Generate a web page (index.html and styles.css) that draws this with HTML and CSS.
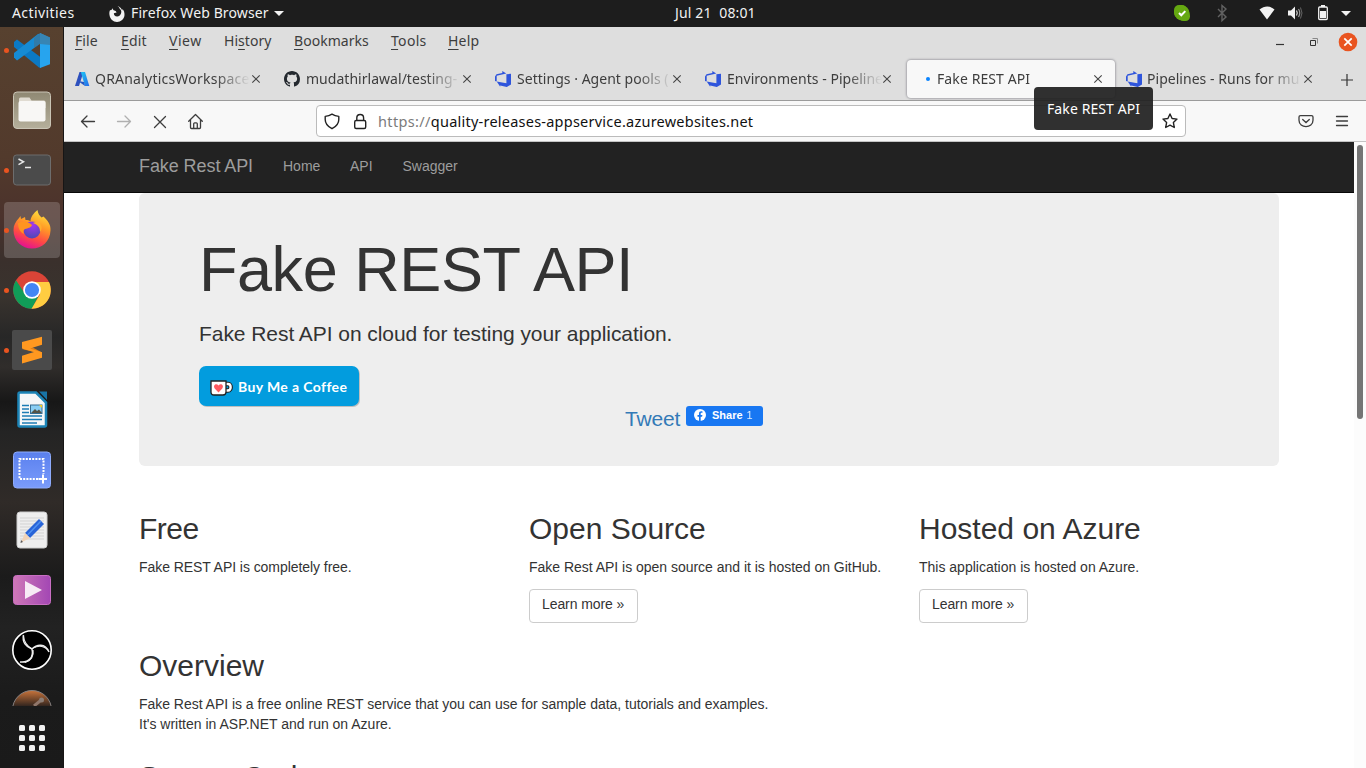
FILE: index.html
```html
<!DOCTYPE html>
<html lang="en">
<head>
<meta charset="utf-8">
<title>Fake REST API</title>
<link rel="stylesheet" href="styles.css">
</head>
<body>
<svg width="0" height="0" class="defs">
  <defs>
    <linearGradient id="ff" x1="0.8" y1="0" x2="0.4" y2="1"><stop offset="0" stop-color="#ffe940"/><stop offset=".4" stop-color="#ff9a26"/><stop offset=".72" stop-color="#ff4a44"/><stop offset="1" stop-color="#e4128f"/></linearGradient>
    <radialGradient id="globe" cx=".55" cy=".2" r=".8"><stop offset="0" stop-color="#a436ee"/><stop offset="1" stop-color="#4c49b5"/></radialGradient>
    <linearGradient id="files" x1="0" y1="0" x2="0" y2="1"><stop offset="0" stop-color="#8f8873"/><stop offset="1" stop-color="#b5af9b"/></linearGradient>
    <linearGradient id="shot" x1="0" y1="0" x2="0" y2="1"><stop offset="0" stop-color="#5a80ee"/><stop offset="1" stop-color="#7b9cfb"/></linearGradient>
    <linearGradient id="vid" x1="0" y1="0" x2="1" y2="0"><stop offset="0" stop-color="#cf78b8"/><stop offset="1" stop-color="#a347b4"/></linearGradient>
    <linearGradient id="post" x1="0" y1="0" x2="0" y2=".42"><stop offset="0" stop-color="#c9743b"/><stop offset="1" stop-color="#2b211d"/></linearGradient>
    <linearGradient id="az" x1="0" y1="0" x2="1" y2="1"><stop offset="0" stop-color="#1fc7f5"/><stop offset="1" stop-color="#2668e8"/></linearGradient>
    <symbol id="x" viewBox="0 0 10 10"><path d="M1.300 1.300l7.400 7.400M8.700 1.300l-7.400 7.400" stroke="#444" stroke-width="1.100" fill="none"/></symbol>
    <symbol id="devops" viewBox="0 0 16 16"><path d="M0 5.400 1.500 3.300 7.300 2V0l4 2.600-9.600 2.200v5.700L0 10z" fill="#2f55dc"/><path d="M16 2.800v10.600L11.800 16l-6.600-1.500v1.300L1.700 10.500l9.700 1.700V3.200z" fill="#2f55dc"/></symbol>
  </defs>
</svg>

<header class="topbar">
  <span class="activities">Activities</span>
  <svg class="ffmono" width="16" height="16" viewBox="0 0 16 16"><path d="M8.500 0c1.300.8 2 1.800 2.200 2.800 1.700 1.200 2 3 1.200 4.900-.7 1.700-2.100 2.800-3.800 2.700C6 10.300 4.700 9 4.900 7.200L7.600 6.500 6.700 4.900 4.600 4.300 3.200 2.200 2.600 4 1 4.200C.3 5.600.2 7.300.5 9c.5 4 3.700 7 7.500 7s7.300-3 7.500-7c.1-2.600-.6-4.400-2-6l-.3 1.500C12.500 2.500 10.900.8 8.500 0z" fill="#f2f2f2"/></svg>
  <span class="appname">Firefox Web Browser</span>
  <svg class="caret" width="10" height="5" viewBox="0 0 10 5"><path d="M0 0h10L5 5z" fill="#f2f2f2"/></svg>
  <span class="clock">Jul 21&nbsp; 08:01</span>
  <svg class="tray" width="200" height="27" viewBox="1166 0 200 27">
    <rect x="1174" y="5" width="13" height="13" rx="5" fill="#65a811"/><circle cx="1182" cy="13" r="7.500" fill="#65a811"/><rect x="1179" y="11" width="11" height="10" rx="4.500" fill="#65a811"/>
    <path d="m1179 13 2.300 2.300 4-4.200" stroke="#fff" stroke-width="2" fill="none"/>
    <path d="m1218 9 8 8-4 3.600V5.500l4 3.500-8 8" stroke="#626262" stroke-width="1.400" fill="none"/>
    <path d="M1259.500 9.600c5-4 10.500-4 15 0L1267 19.500z" fill="#f2f2f2"/>
    <path d="M1288 10.500h3l4-4v13l-4-4h-3z" fill="#f2f2f2"/><path d="M1296.500 10.500q1.500 2.500 0 5" stroke="#ddd" stroke-width="1.200" fill="none"/><path d="M1298.500 9q2.500 4 0 8" stroke="#999" stroke-width="1.200" fill="none"/><path d="M1300.500 7.500q3 5.500 0 11" stroke="#666" stroke-width="1" fill="none"/>
    <rect x="1318.700" y="7" width="8.600" height="12.500" rx="1" stroke="#f2f2f2" stroke-width="1.300" fill="none"/><path d="M1321 5h4v2h-4zM1320 11h6v7h-6z" fill="#f2f2f2"/>
    <path d="M1341 11h10l-5 5z" fill="#f2f2f2"/>
  </svg>
</header>

<div class="desktop">
<aside class="dock">
  <div class="app first run"><svg width="64" height="53" viewBox="0 7 64 53"><path d="m14 22 3-2.500L41 37.500V48l-2-.5L14 27z" fill="#0b79c4"/><path d="m14 37.500 3 3L41 23v-9.500L38 14 14 33z" fill="#168bd4"/><path d="M40 13l10 4.500v26.800L40 48z" fill="#27a4ee"/><path d="M40 13l10 4.500V25l-10-1-6 4v-10z" fill="#42728e" opacity=".6"/></svg></div>
  <div class="app"><svg width="64" height="60"><rect x="13.500" y="12" width="37" height="36.500" rx="3.500" fill="url(#files)" stroke="#c9c4b5"/><path d="M19 19q0-1.500 1.500-1.500h9l2 3H44q1.500 0 1.500 1.500v6H19z" fill="#e0dbd1"/><rect x="18.500" y="21" width="27" height="20.500" rx="2" fill="#f8f7f5"/></svg></div>
  <div class="app run"><svg width="64" height="60"><rect x="13.500" y="15" width="37" height="30" rx="3" fill="#4b4b4b" stroke="#6d6d6d"/><path d="m18.500 19 5 2.800-5 2.800M25 27.500h6" stroke="#e8e8e8" stroke-width="1.500" fill="none"/></svg></div>
  <div class="app run active"><svg width="64" height="60"><path d="M13.500 30c0-5 2-8 5.500-12l1.500-2 .5 3 4-2 .5 3c2 0 4 .5 5 1.200 0-4 3-8 7-11.200.5 4 2 5.500 4 7.500l2-1c4 4 7.500 8 7 14C50 41.500 42 48.500 32 48.500S13.500 41 13.500 30z" fill="url(#ff)"/><circle cx="32" cy="30" r="8.500" fill="url(#globe)"/><path d="M18 23c5-2 10-1.500 14 2-1 3-4 3-7 4-2 1-2 3-1 5-4-2-6-6-6-11z" fill="#ff9420"/><path d="M33 23c3-2 7-1 8 2 1.500 3 0 6-1 7 0-5-2-7-7-9z" fill="#ffad2d"/></svg></div>
  <div class="app run"><svg width="64" height="60"><circle cx="32" cy="30" r="18.700" fill="#da4437"/><path d="M16 20.300A18.700 18.700 0 0 0 32 48.700l6-12-13-3z" fill="#109d58"/><path d="M49 22H32l8 12.500-8.500 14.200A18.700 18.700 0 0 0 49 22z" fill="#ffcd41"/><circle cx="32" cy="30" r="8.800" fill="#fff"/><circle cx="32" cy="30" r="7.100" fill="#4285f4"/></svg></div>
  <div class="app run"><svg width="64" height="60"><rect x="12" y="10" width="40" height="40" rx="2" fill="#4a4a4a"/><path d="m22 29 20 5v-1.500L30 26z" fill="#df7d12"/><path d="m22 22 20-5.300v8L30 28.500l12 3.800v5.500l-20 5.700v-7.800L34 32l-12-3.500z" fill="#ff9820"/></svg></div>
  <div class="app"><svg width="64" height="60"><path d="M18.500 14q0-1.500 1.500-1.500h16l10 10V45q0 1.500-1.500 1.500H20q-1.500 0-1.500-1.500z" fill="#f5f7f8" stroke="#1c84b6" stroke-width="2.500"/><path d="M39 11.500h8V20z" fill="#1874a6"/><path d="M22 25.500h7M22 29h7M22 32.500h7M22 36h20M22 39.500h20M22 43h15" stroke="#1c7cb4" stroke-width="1.500"/><rect x="30.500" y="25" width="11.500" height="8.500" fill="#88cef4" stroke="#376d91"/><path d="m31 33 4-4 2 2 2-1.500 3 3.500z" fill="#535347"/><path d="M39 25h3v3z" fill="#f8cc17"/></svg></div>
  <div class="app"><svg width="64" height="60"><rect x="13.500" y="12" width="37" height="36" rx="3.500" fill="url(#shot)" stroke="#8eabfb"/><path d="M38 39H19.500V19h24v15" fill="none" stroke="#fff" stroke-width="2" stroke-dasharray="2 1.200"/><path d="M38.500 39h8.500M43 34.500v9" stroke="#fff" stroke-width="2"/></svg></div>
  <div class="app"><svg width="64" height="60"><rect x="17" y="12" width="30" height="36" rx="3" fill="#eee" stroke="#ccc"/><path d="M20 18h24M20 21h24M20 24h24M20 27h24M20 30h24M20 33h24M20 36h24M20 39h24" stroke="#d3d3d3"/><path d="m39 19 5 5-14 14-5-5z" fill="#2864d8"/><path d="m41 21-13.500 14" stroke="#4f91f1" stroke-width="1.500"/><path d="m25 33 5 5-9 4.500z" fill="#f1d4b8"/><path d="m21 40 2 2-2.500 1z" fill="#555"/></svg></div>
  <div class="app"><svg width="64" height="60"><rect x="13.500" y="15.500" width="37" height="29" rx="3" fill="url(#vid)" stroke="#c96fc3"/><path d="M25 21v18l17-9z" fill="#f7eaf5"/></svg></div>
  <div class="app"><svg width="64" height="60"><circle cx="32" cy="30" r="19.200" fill="#000" stroke="#fff" stroke-width="1.600"/><path d="M32 29c-6-2-10-7-8.500-14M32 29c5-5 13-6 17 3M32 29c2 8-3 14-12 13" fill="none" stroke="#eee" stroke-width="1.500"/><path d="M32 29c-5-3-8-7-8.500-13M33 28c6-3 11-2 15 2M33 30c1 6-2 11-8 12.500" fill="none" stroke="#eee" stroke-width="1.200"/></svg></div>
  <div class="app cut"><svg width="64" height="26"><circle cx="32" cy="30" r="19.500" fill="url(#post)" stroke="#858080"/><path d="m34 26 6-5" stroke="#90776b" stroke-width="3"/><circle cx="41.500" cy="20" r="2.500" fill="#8b7d75"/></svg></div>
  <div class="grid"><i></i><i></i><i></i><i></i><i></i><i></i><i></i><i></i><i></i></div>
</aside>

<main class="browser">
  <div class="menubar">
    <nav class="menus"><span class="m1"><u>F</u>ile</span><span class="m2"><u>E</u>dit</span><span class="m3"><u>V</u>iew</span><span class="m4">Hi<u>s</u>tory</span><span class="m5"><u>B</u>ookmarks</span><span class="m6"><u>T</u>ools</span><span class="m7"><u>H</u>elp</span></nav>
    <svg width="90" height="30" viewBox="1270 27 90 30"><path d="M1276 44.500h8" stroke="#333" stroke-width="1.200"/><path d="M1310.500 40.500h5v5h-5z" fill="none" stroke="#333"/><path d="M1312.500 38.500h5v5" fill="none" stroke="#888"/><circle cx="1348" cy="42" r="9.300" fill="#e95420"/><path d="m1344.300 38.300 7.400 7.400m0-7.400-7.400 7.400" stroke="#fff" stroke-width="1.700"/></svg>
  </div>
  <div class="tabs">
    <div class="tab first-tab"><svg class="fav" width="16" height="16"><path d="M5.500 1h4L5 15H1z" fill="#2d50bd"/><path d="M7 1h4l4.300 14H11L8 5z" fill="url(#az)"/><path d="m4 10 6 1 1 4z" fill="#2456c5"/></svg><span class="t">QRAnalyticsWorkspace</span><svg class="close" width="10" height="10"><use href="#x"/></svg></div>
    <div class="tab"><svg class="fav" width="16" height="16" viewBox="0 0 16 16"><path d="M8 0C3.580 0 0 3.580 0 8c0 3.540 2.290 6.530 5.470 7.590.4.070.55-.17.55-.38 0-.19-.01-.82-.01-1.490-2.010.37-2.530-.49-2.690-.94-.09-.23-.48-.94-.82-1.130-.28-.15-.68-.52-.01-.53.630-.01 1.080.58 1.230.82.720 1.210 1.870.87 2.330.66.070-.52.280-.87.510-1.070-1.780-.2-3.640-.89-3.640-3.950 0-.87.310-1.590.82-2.150-.08-.2-.36-1.020.08-2.120 0 0 .67-.21 2.200.82.640-.18 1.320-.27 2-.27s1.360.09 2 .27c1.530-1.040 2.200-.82 2.200-.82.440 1.100.16 1.920.08 2.120.510.56.820 1.270.82 2.150 0 3.070-1.870 3.750-3.650 3.950.290.25.540.73.540 1.480 0 1.070-.01 1.930-.01 2.200 0 .21.150.46.550.38A8 8 0 0 0 16 8c0-4.420-3.580-8-8-8z" fill="#24292f"/></svg><span class="t">mudathirlawal/testing-</span><svg class="close" width="10" height="10"><use href="#x"/></svg></div>
    <div class="tab third"><svg class="fav" width="16" height="16"><use href="#devops"/></svg><span class="t">Settings · Agent pools (</span><svg class="close" width="10" height="10"><use href="#x"/></svg></div>
    <div class="tab third"><svg class="fav" width="16" height="16"><use href="#devops"/></svg><span class="t">Environments - Pipeline</span><svg class="close" width="10" height="10"><use href="#x"/></svg></div>
    <div class="tab current"><i class="loading"></i><span class="t">Fake REST API</span><svg class="close" width="10" height="10"><use href="#x"/></svg></div>
    <div class="tab last"><svg class="fav" width="16" height="16"><use href="#devops"/></svg><span class="t">Pipelines - Runs for mu</span><svg class="close" width="10" height="10"><use href="#x"/></svg></div>
    <svg class="plus" width="12" height="12"><path d="M6 0v12M0 6h12" stroke="#333" stroke-width="1.200"/></svg>
  </div>
  <div class="toolbar">
    <svg width="252" height="40" viewBox="64 101 252 40" fill="none" stroke="#3d3d3d" stroke-width="1.300" stroke-linejoin="round" stroke-linecap="round"><path d="M81.500 121.500h13M87 116l-5.500 5.500L87 127"/><path d="M117.500 121.500h13M125 116l5.500 5.500-5.500 5.500" stroke="#b0b0b0"/><path d="m154.500 116.500 11 11m0-11-11 11"/><path d="m188.700 121.300 6.800-6.800 6.800 6.800M190.500 120v7.500q0 1 1 1h8q1 0 1-1V120M193.700 128.500v-4.700q0-1 1-1h1.600q1 0 1 1v4.700"/></svg>
    <div class="urlbar">
      <svg width="54" height="30" viewBox="317 106 54 30" fill="none" stroke="#222" stroke-width="1.400" stroke-linejoin="round"><path d="M332 114.200c2 1.300 4.300 2 6.800 2.200v3c0 4-2.500 7-6.800 9.300-4.300-2.300-6.800-5.300-6.800-9.300v-3c2.500-.2 4.800-.9 6.800-2.200z"/><rect x="354.700" y="120.500" width="11" height="8" rx="1.500"/><path d="M356.800 120.500V118c0-4.600 6.800-4.600 6.800 0v2.500"/></svg>
      <span class="url"><span class="scheme">https://</span>quality-releases-appservice.azurewebsites.net</span>
      <svg class="star" width="16" height="16" viewBox="0 0 16 16"><path d="m8 1 2.100 4.500 4.900.6-3.600 3.500.9 4.900L8 12.200l-4.300 2.300.9-4.900L1 6.100l4.900-.6z" fill="none" stroke="#222" stroke-width="1.400" stroke-linejoin="round"/></svg>
    </div>
    <svg class="right" width="60" height="40" viewBox="1296 101 60 40" fill="none" stroke="#3d3d3d" stroke-width="1.300" stroke-linecap="round"><path d="M1300.500 115.600h11q1.500 0 1.500 1.500v3.200c0 8.500-14 8.500-14 0v-3.200q0-1.500 1.500-1.500z"/><path d="m1302.700 119.500 3.300 3 3.300-3"/><path d="M1336.500 116.500h11M1336.500 121h11M1336.500 125.500h11"/></svg>
  </div>
  <div class="tooltip">Fake REST API</div>

  <div class="viewport">
    <div class="page">
      <nav class="navbar"><a class="brand">Fake Rest API</a><a class="n1">Home</a><a class="n2">API</a><a class="n3">Swagger</a></nav>
      <div class="container">
        <section class="jumbo">
          <h1>Fake REST API</h1>
          <p class="lead">Fake Rest API on cloud for testing your application.</p>
          <a class="coffee"><svg width="23" height="17" viewBox="0 0 23 17"><path d="M16 4h2c3.500 0 3.500 6.500 0 6.500h-2" fill="none" stroke="#222" stroke-width="4.600"/><path d="M16 4h2c3.500 0 3.500 6.500 0 6.500h-2" fill="none" stroke="#fff" stroke-width="2.400"/><path d="M1 1h15v11q0 3-3 3H4q-3 0-3-3z" fill="#fff" stroke="#222" stroke-width="1.300"/><path d="M8.500 12.500 4.700 8.500C2.500 5 6.500 2.800 8.500 5.500c2-2.700 6-.5 3.800 3z" fill="#ff5a60"/></svg><span>Buy Me a Coffee</span></a>
          <div class="social"><a class="tweet">Tweet</a><a class="share"><svg width="12" height="12" viewBox="0 0 12 12"><circle cx="6" cy="6" r="6" fill="#fff"/><path d="M5 12V7.700H3.500V6H5V4.700c0-1.600.9-2.400 2.300-2.400.5 0 .9 0 1.200.1v1.400h-.8c-.7 0-1 .4-1 1V6h1.700l-.3 1.700H6.700V12z" fill="#1877f2"/></svg><b>Share</b><span>1</span></a></div>
        </section>
        <div class="cols">
          <section><h2 class="free">Free</h2><p class="c1">Fake REST API is completely free.</p></section>
          <section><h2>Open Source</h2><p class="c2">Fake Rest API is open source and it is hosted on GitHub.</p><a class="btn">Learn more »</a></section>
          <section><h2>Hosted on Azure</h2><p class="c3">This application is hosted on Azure.</p><a class="btn">Learn more »</a></section>
        </div>
        <section class="overview"><h2>Overview</h2><p><span class="o1">Fake Rest API is a free online REST service that you can use for sample data, tutorials and examples.</span><br>It's written in ASP.NET and run on Azure.</p></section>
        <section class="source"><h2>Source Code</h2></section>
      </div>
    </div>
    <div class="scroll"><i></i></div>
  </div>
</main>
</div>
</body>
</html>
```
FILE: styles.css
```css
* { box-sizing: border-box; }
body { margin: 0; width: 1366px; height: 768px; overflow: hidden; background: #fff; font-family: "Noto Sans", "Open Sans", sans-serif; }
svg { display: block; flex: none; }
.defs { position: absolute; }
span, a { white-space: nowrap; }

.topbar { position: relative; height: 27px; background: #1d1d1d; color: #f2f2f2; font-size: 14px; line-height: 26px; display: flex; align-items: center; padding-left: 12px; }
.activities { width: 97px; letter-spacing: .42px; padding-bottom: 1px; }
.appname { margin-left: 6px; width: 138px; letter-spacing: .12px; padding-bottom: 1px; }
.caret { margin-left: 5px; }
.clock { position: absolute; left: 675px; top: 0; letter-spacing: .15px; }
.tray { margin-left: auto; }

.desktop { display: flex; height: 741px; }
.dock { width: 64px; flex: none; display: flex; flex-direction: column; box-shadow: inset -1px 0 0 #171515; background: linear-gradient(#57412f 0, #523a2c 130px, #4b322c 190px, #3a302c 235px, #39332e 270px, #272727 310px, #302d2b 340px, #171717 375px, #242424 405px, #302b28 475px, #1b1b1b 550px, #222 600px, #1b1b1b 670px, #1a1a1a); }
.app { height: 60px; flex: none; position: relative; }
.first { height: 53px; }
.cut { height: 26px; overflow: hidden; }
.app svg { position: relative; }
.run::before { content: ""; position: absolute; left: 4px; bottom: 27px; width: 5px; height: 5px; border-radius: 50%; background: #e95420; z-index: 1; }
.active::after { content: ""; position: absolute; inset: 2px 4px; border-radius: 4px; background: rgba(255,255,255,.18); }
.active svg { z-index: 1; }
.grid { display: grid; grid-template-columns: repeat(3, 6px); grid-auto-rows: 6px; gap: 4px; margin: 19px 0 0 19px; }
.grid i { background: #f2f2f2; border-radius: 1.5px; }

.browser { flex: 1; min-width: 0; position: relative; display: flex; flex-direction: column; }
.menubar { height: 30px; background: #dedede; display: flex; justify-content: space-between; padding-right: 6px; }
.menus { display: flex; padding-left: 11px; color: #3d3d3d; font-size: 14px; line-height: 28px; letter-spacing: .05px; }
.menus u { text-underline-offset: 3px; text-decoration-thickness: 1px; }
.m1 { width: 46px; } .m2 { width: 48px; letter-spacing: .2px; } .m3 { width: 55px; letter-spacing: .5px; } .m4 { width: 70px; } .m5 { width: 97px; } .m6 { width: 57px; letter-spacing: .3px; } .m7 { width: 40px; letter-spacing: .2px; }
.tabs { height: 44px; background: #dedede; border-bottom: 1px solid #9b9b9b; display: flex; padding: 3px 0 2px 1px; }
.tab { width: 210px; height: 38px; padding-left: 9px; display: flex; align-items: center; color: #3d3d3d; font-size: 14px; flex: none; }
.t { width: 155px; margin-left: 6px; overflow: hidden; line-height: 24px; letter-spacing: .03px; -webkit-mask-image: linear-gradient(90deg, #000 120px, transparent 155px); mask-image: linear-gradient(90deg, #000 120px, transparent 155px); }
.first-tab .t { letter-spacing: .22px; margin-left: 5px; }
.close { margin-left: 1px; }
.third { padding-left: 10px; }
.third .close { margin-left: 0; }
.current { width: 208px; margin: 0 0 0 2px; background: #f8f8f8; border-radius: 4px; box-shadow: 0 0 2px 1px #aaa9ae; padding-left: 19px; }
.loading { width: 4px; height: 4px; border-radius: 50%; background: #0a84ff; }
.current .t { margin-left: 7px; letter-spacing: .1px; }
.last { padding-left: 11px; }
.last .t { margin-left: 5px; }
.plus { margin: 14px 0 0 16px; }
.toolbar { height: 41px; background: #f8f8f8; border-bottom: 1px solid #c4c4c4; display: flex; }
.urlbar { width: 870px; height: 32px; margin-top: 4px; background: #fff; border: 1px solid #bbb; border-radius: 4px; display: flex; align-items: center; font-size: 14.5px; color: #111; }
.url { margin-left: 7px; letter-spacing: .235px; }
.scheme { color: #7b7b7b; letter-spacing: .35px; }
.star { margin: 0 7px 0 auto; }
.right { margin-left: 110px; }
.tooltip { position: absolute; left: 970px; top: 60px; width: 119px; height: 43px; border-radius: 4px; background: rgba(32,32,32,.93); color: #fff; font-size: 14px; line-height: 44px; padding-left: 13px; letter-spacing: .1px; white-space: nowrap; z-index: 5; }

.viewport { height: 626px; display: flex; overflow: hidden; }
.page { width: 1290px; overflow: hidden; background: #fff; color: #333; font: 14px/20px "Liberation Sans", Arial, sans-serif; }
.scroll { width: 12px; padding: 3px 2px; background: #fcfcfc; }
.scroll i { display: block; width: 6px; height: 274px; margin-left: 1px; border-radius: 4px; background: #757575; }
.navbar { height: 51px; background: #222; border-bottom: 1px solid #080808; color: #9d9d9d; display: flex; padding-left: 75px; line-height: 49px; }
.brand { font-size: 18px; width: 144px; letter-spacing: -.08px; }
.n1 { width: 67px; } .n2 { width: 52px; }
.n3 { padding-left: .5px; }
.container { width: 1140px; margin-left: 75px; }
h1, h2, p { margin: 0; font-weight: 400; }
.jumbo { height: 273px; background: #eee; border-radius: 6px; padding: 42px 60px 0; display: flex; flex-direction: column; align-items: flex-start; }
h1 { font-size: 63px; line-height: 69px; white-space: nowrap; letter-spacing: -.45px; }
.lead { font-size: 21px; line-height: 30px; margin-top: 15px; white-space: nowrap; letter-spacing: -.055px; }
.coffee { margin-top: 17px; width: 160px; height: 40px; border-radius: 7px; background: #029cde; box-shadow: 1px 1px 0 rgba(0,0,0,.2); color: #fff; font: 700 14px/42px Lato, sans-serif; letter-spacing: .38px; display: flex; align-items: center; padding-left: 11px; }
.coffee svg { margin-top: 4px; }
.coffee span { margin-left: 5px; margin-top: 2px; }
.social { display: flex; margin-left: 426px; height: 24px; font-size: 21px; line-height: 26px; }
.tweet { color: #337ab7; width: 61px; letter-spacing: -.15px; }
.share { width: 77px; height: 20px; border-radius: 3px; background: #1877f2; color: #fff; display: flex; align-items: center; font-size: 11px; line-height: 18px; padding: 0 0 2px 8px; }
.share b { margin-left: 6px; }
.share span { margin-left: 4px; opacity: .85; }
.cols { display: grid; grid-template-columns: 390px 390px 360px; margin-top: 46px; height: 137px; }
h2 { font-size: 30px; line-height: 33px; white-space: nowrap; }
.free { letter-spacing: -.5px; }
h2 + p { margin-top: 12px; white-space: nowrap; }
.c1 { letter-spacing: -.06px; }
.c2 { letter-spacing: -.02px; }
.o1 { letter-spacing: -.03px; }
.btn { display: block; width: 109px; height: 34px; margin-top: 12px; border: 1px solid #ccc; border-radius: 4px; padding-left: 12px; line-height: 29px; letter-spacing: -.08px; }
.source { margin-top: 26px; }
```
